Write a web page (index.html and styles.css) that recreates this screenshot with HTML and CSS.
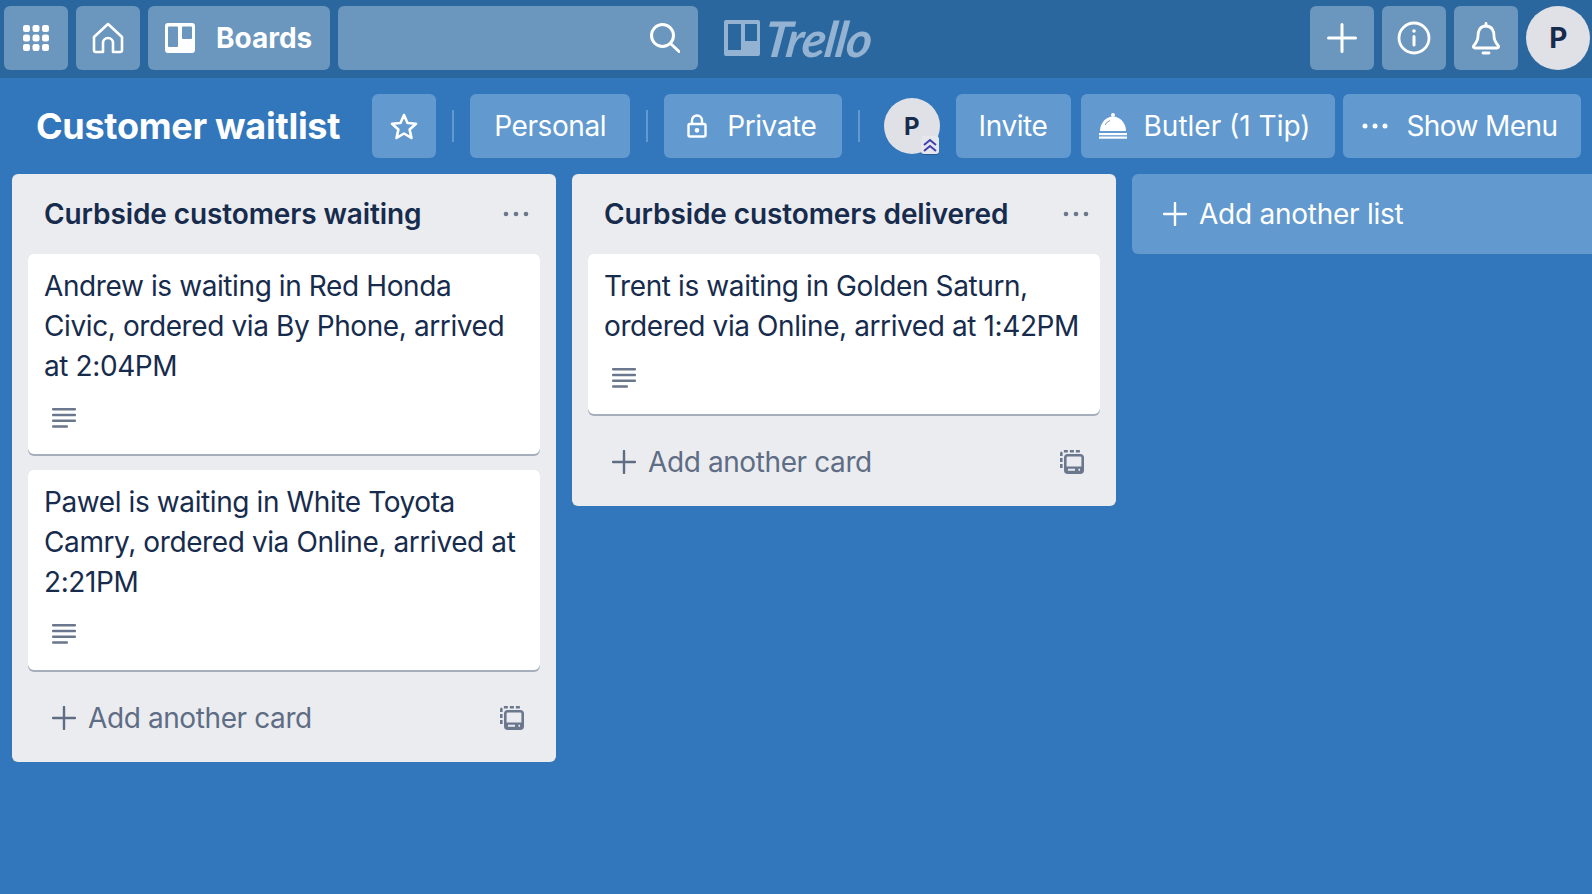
FILE: index.html
```html
<!DOCTYPE html>
<html lang="en">
  <head>
    <meta charset="UTF-8" />
    <title>Customer waitlist | Trello</title>
    <link rel="stylesheet" href="styles.css">
  </head>
  <body>
    <!-- Top bar -->
    <header class="topbar">
      <button class="top-btn square" aria-label="Apps">
        <svg class="icon" width="28" height="28" viewBox="0 0 28 28" fill="#fff">
          <rect x="1" y="1" width="7" height="7" rx="2.2"/><rect x="10.5" y="1" width="7" height="7" rx="2.2"/><rect x="20" y="1" width="7" height="7" rx="2.2"/>
          <rect x="1" y="10.5" width="7" height="7" rx="2.2"/><rect x="10.5" y="10.5" width="7" height="7" rx="2.2"/><rect x="20" y="10.5" width="7" height="7" rx="2.2"/>
          <rect x="1" y="20" width="7" height="7" rx="2.2"/><rect x="10.5" y="20" width="7" height="7" rx="2.2"/><rect x="20" y="20" width="7" height="7" rx="2.2"/>
        </svg>
      </button>
      <button class="top-btn square" aria-label="Home">
        <svg class="icon" width="32" height="32" viewBox="0 0 32 32" fill="none" stroke="#fff" stroke-width="2.6" stroke-linejoin="round">
          <path d="M16 2 L2 15 V28 a2 2 0 0 0 2 2 H11 V21 a5 5 0 0 1 10 0 V30 H28 a2 2 0 0 0 2 -2 V15 Z"/>
        </svg>
      </button>
      <button class="top-btn boards-btn">
        <svg class="icon" width="30" height="30" viewBox="0 0 30 30">
          <path fill="#fff" fill-rule="evenodd" d="M3 0 H27 a3 3 0 0 1 3 3 V27 a3 3 0 0 1 -3 3 H3 a3 3 0 0 1 -3 -3 V3 a3 3 0 0 1 3 -3 Z M4 3.5 a1 1 0 0 0 -1 1 V23 a1 1 0 0 0 1 1 H12 a1 1 0 0 0 1 -1 V4.500 a1 1 0 0 0 -1 -1 Z M18 3.500 a1 1 0 0 0 -1 1 V15 a1 1 0 0 0 1 1 H26 a1 1 0 0 0 1 -1 V4.500 a1 1 0 0 0 -1 -1 Z"/>
        </svg>
        <span>Boards</span>
      </button>
      <div class="search">
        <svg class="icon" width="30" height="30" viewBox="0 0 30 30" fill="none" stroke="#fff" stroke-width="3" stroke-linecap="round">
          <circle cx="12.500" cy="12.500" r="11"/>
          <path d="M20.500 20.500 L29 28.500"/>
        </svg>
      </div>
      <div class="logo">
        <svg class="logo-mark" width="36" height="36" viewBox="0 0 36 36">
          <path fill="#94b2d1" fill-rule="evenodd" d="M2 0 H34 a2 2 0 0 1 2 2 V34 a2 2 0 0 1 -2 2 H2 a2 2 0 0 1 -2 -2 V2 a2 2 0 0 1 2 -2 Z M4 4 V30 H17 V4 Z M21 4 V21 H33 V4 Z"/>
        </svg>
        <span class="logo-text">Trello</span>
      </div>
      <div class="top-right">
        <button class="top-btn square" aria-label="Create">
          <svg class="icon" width="30" height="30" viewBox="0 0 30 30" stroke="#fff" stroke-width="3" stroke-linecap="round">
            <path d="M15 1.500 V28.500 M1.500 15 H28.500"/>
          </svg>
        </button>
        <button class="top-btn square" aria-label="Information">
          <svg class="icon" width="34" height="34" viewBox="0 0 34 34" fill="none" stroke="#fff" stroke-width="2.800" stroke-linecap="round">
            <circle cx="17" cy="17" r="15"/>
            <path d="M17 15.500 V24" stroke-width="3"/>
            <circle cx="17" cy="10" r="1.100" fill="#fff" stroke-width="1.400"/>
          </svg>
        </button>
        <button class="top-btn square" aria-label="Notifications">
          <svg class="icon" width="28" height="33" viewBox="0 0 28 33" fill="none" stroke="#fff" stroke-width="2.800" stroke-linejoin="round" stroke-linecap="round">
            <path d="M14 4 C8 4 6 9 6 14 C6 19 4 21 1.500 24 Q1 26 3 26 H25 Q27 26 26.500 24 C24 21 22 19 22 14 C22 9 20 4 14 4 Z"/>
            <path d="M14 1.500 V4 M11 31 H17"/>
          </svg>
        </button>
        <div class="avatar avatar-top">P</div>
      </div>
    </header>

    <!-- Board header -->
    <div class="board-bar">
      <h1 class="board-title">Customer waitlist</h1>
      <button class="board-btn star-btn" aria-label="Star">
        <svg class="icon" width="28" height="27" viewBox="0 0 28 27" fill="none" stroke="#fff" stroke-width="2.600" stroke-linejoin="round">
          <path d="M14 2 L17.500 10 L26 10.800 L19.600 16.500 L21.500 25 L14 20.500 L6.500 25 L8.400 16.500 L2 10.800 L10.500 10 Z"/>
        </svg>
      </button>
      <span class="sep"></span>
      <button class="board-btn">Personal</button>
      <span class="sep"></span>
      <button class="board-btn private-btn">
        <svg class="icon" width="20" height="24" viewBox="0 0 20 24" fill="none" stroke="#fff" stroke-width="2.400">
          <path d="M5 10 V6.500 a5 5 0 0 1 10 0 V10"/>
          <rect x="1.500" y="10" width="17" height="12.500" rx="1.500"/>
          <circle cx="10" cy="16.300" r="1.200" fill="#fff"/>
        </svg>
        Private
      </button>
      <span class="sep"></span>
      <div class="avatar avatar-member">
        P
        <span class="admin-badge">
          <svg width="16" height="15" viewBox="0 0 16 15" fill="none" stroke="#3f3fb0" stroke-width="2">
            <path d="M2 7 L8 2 L14 7 M2 13 L8 8 L14 13"/>
          </svg>
        </span>
      </div>
      <button class="board-btn invite-btn">Invite</button>
      <button class="board-btn butler-btn">
        <svg class="icon" width="28" height="26" viewBox="0 0 28 26" fill="#fff">
          <circle cx="14" cy="2" r="2"/>
          <path d="M1 18 C1 10 7 3.500 14 3.500 C21 3.500 27 10 27 18 Z"/>
          <rect x="0" y="20" width="28" height="2.200"/>
          <rect x="0" y="23.500" width="28" height="2.200"/>
          <path d="M6 12 Q8 8.500 11 7.500" fill="none" stroke="#8a98a8" stroke-width="1"/>
        </svg>
        Butler (1 Tip)
      </button>
      <button class="board-btn menu-btn">
        <svg class="icon" width="26" height="6" viewBox="0 0 26 6" fill="#fff">
          <circle cx="3" cy="3" r="2.500"/><circle cx="13" cy="3" r="2.500"/><circle cx="23" cy="3" r="2.500"/>
        </svg>
        Show Menu
      </button>
    </div>

    <!-- Lists -->
    <main class="lists">
      <section class="list">
        <div class="list-head">
          <h2>Curbside customers waiting</h2>
          <svg class="dots" width="26" height="6" viewBox="0 0 26 6" fill="#6b778c">
            <circle cx="3" cy="3" r="2.300"/><circle cx="13" cy="3" r="2.300"/><circle cx="23" cy="3" r="2.300"/>
          </svg>
        </div>
        <article class="card">
          <p>Andrew is waiting in Red Honda Civic, ordered via By Phone, arrived at 2:04PM</p>
          <svg class="desc-icon" width="24" height="20" viewBox="0 0 24 20" fill="#6b778c">
            <rect y="0" width="24" height="2.400" rx="1"/><rect y="5.800" width="24" height="2.400" rx="1"/><rect y="11.500" width="24" height="2.400" rx="1"/><rect y="17.300" width="16" height="2.400" rx="1"/>
          </svg>
        </article>
        <article class="card">
          <p>Pawel is waiting in White Toyota Camry, ordered via Online, arrived at 2:21PM</p>
          <svg class="desc-icon" width="24" height="20" viewBox="0 0 24 20" fill="#6b778c">
            <rect y="0" width="24" height="2.400" rx="1"/><rect y="5.800" width="24" height="2.400" rx="1"/><rect y="11.500" width="24" height="2.400" rx="1"/><rect y="17.300" width="16" height="2.400" rx="1"/>
          </svg>
        </article>
        <div class="list-foot">
          <svg class="plus" width="24" height="24" viewBox="0 0 24 24" stroke="#5e6c84" stroke-width="2.400" stroke-linecap="round">
            <path d="M12 1 V23 M1 12 H23"/>
          </svg>
          <span>Add another card</span>
          <svg class="template" width="24" height="24" viewBox="0 0 24 24" fill="none" stroke="#6b778c" stroke-width="2.600">
            <path d="M1.300 18 V4 a2.700 2.700 0 0 1 2.700 -2.700 H20" stroke-dasharray="4 2"/>
            <rect x="5.300" y="5.300" width="17.400" height="17.400" rx="2.500"/>
            <path d="M5 16.500 H23 V20.500 a2.500 2.500 0 0 1 -2.500 2.500 H7.500 a2.500 2.500 0 0 1 -2.500 -2.500 Z" fill="#6b778c" stroke="none"/>
            <path d="M8 19.800 H15 M18.500 19.800 H20" stroke="#ebecf0" stroke-width="2"/>
          </svg>
        </div>
      </section>

      <section class="list">
        <div class="list-head">
          <h2>Curbside customers delivered</h2>
          <svg class="dots" width="26" height="6" viewBox="0 0 26 6" fill="#6b778c">
            <circle cx="3" cy="3" r="2.300"/><circle cx="13" cy="3" r="2.300"/><circle cx="23" cy="3" r="2.300"/>
          </svg>
        </div>
        <article class="card">
          <p>Trent is waiting in Golden Saturn, ordered via Online, arrived at 1:42PM</p>
          <svg class="desc-icon" width="24" height="20" viewBox="0 0 24 20" fill="#6b778c">
            <rect y="0" width="24" height="2.400" rx="1"/><rect y="5.800" width="24" height="2.400" rx="1"/><rect y="11.500" width="24" height="2.400" rx="1"/><rect y="17.300" width="16" height="2.400" rx="1"/>
          </svg>
        </article>
        <div class="list-foot">
          <svg class="plus" width="24" height="24" viewBox="0 0 24 24" stroke="#5e6c84" stroke-width="2.400" stroke-linecap="round">
            <path d="M12 1 V23 M1 12 H23"/>
          </svg>
          <span>Add another card</span>
          <svg class="template" width="24" height="24" viewBox="0 0 24 24" fill="none" stroke="#6b778c" stroke-width="2.600">
            <path d="M1.300 18 V4 a2.700 2.700 0 0 1 2.700 -2.700 H20" stroke-dasharray="4 2"/>
            <rect x="5.300" y="5.300" width="17.400" height="17.400" rx="2.500"/>
            <path d="M5 16.500 H23 V20.500 a2.500 2.500 0 0 1 -2.500 2.500 H7.500 a2.500 2.500 0 0 1 -2.500 -2.500 Z" fill="#6b778c" stroke="none"/>
            <path d="M8 19.800 H15 M18.500 19.800 H20" stroke="#ebecf0" stroke-width="2"/>
          </svg>
        </div>
      </section>

      <button class="add-list">
        <svg width="24" height="24" viewBox="0 0 24 24" stroke="#fff" stroke-width="2.400" stroke-linecap="round">
          <path d="M12 1 V23 M1 12 H23"/>
        </svg>
        Add another list
      </button>
    </main>
  </body>
</html>
```

FILE: styles.css
```css
/* General Styling */
* {
  box-sizing: border-box;
}
html,
body {
  height: 100%;
}
body {
  margin: 0;
  overflow: hidden;
  font-family: Inter, "Noto Sans", sans-serif;
  font-size: 28px;
  letter-spacing: -0.4px;
  color: #172b4d;
  background-color: #3277bb;
}
button {
  border: none;
  padding: 0;
  margin: 0;
  color: #fff;
  font: inherit;
  letter-spacing: inherit;
  cursor: pointer;
}
.icon {
  flex: none;
}

/* Top Bar */
.topbar {
  display: flex;
  align-items: flex-start;
  gap: 8px;
  height: 78px;
  padding: 6px 2px 0 4px;
  background-color: #2a679f;
}
.top-btn {
  display: flex;
  align-items: center;
  justify-content: center;
  height: 64px;
  border-radius: 6px;
  background-color: #6b96bd;
}
.square {
  width: 64px;
}
.boards-btn {
  width: 182px;
  justify-content: flex-start;
  gap: 21px;
  padding-left: 17px;
  font-weight: 700;
  letter-spacing: 0;
}
.search {
  display: flex;
  align-items: center;
  justify-content: flex-end;
  width: 360px;
  height: 64px;
  padding-right: 18px;
  border-radius: 6px;
  background-color: #6b96bd;
}
.logo {
  display: flex;
  align-items: center;
  gap: 5px;
  height: 64px;
  margin-left: 18px;
  color: #94b2d1;
}
.logo-text {
  font-family: Lato, sans-serif;
  font-style: italic;
  font-weight: 700;
  font-size: 49px;
  line-height: 56px;
  letter-spacing: -1px;
  transform: skewX(-8deg);
}
.top-right {
  display: flex;
  align-items: center;
  gap: 8px;
  margin-left: auto;
}
.avatar {
  display: flex;
  align-items: center;
  justify-content: center;
  border-radius: 50%;
  background-color: #dfe1e6;
  color: #172b4d;
  font-weight: 700;
}
.avatar-top {
  width: 64px;
  height: 64px;
}

/* Board Header */
.board-bar {
  display: flex;
  align-items: center;
  height: 64px;
  margin-top: 16px;
  padding-left: 36px;
}
.board-title {
  flex: none;
  margin: 0 32px 0 0;
  font-size: 36px;
  font-weight: 700;
  line-height: 64px;
  letter-spacing: -0.28px;
  white-space: nowrap;
  color: #fff;
}
.board-btn {
  display: flex;
  align-items: center;
  flex: none;
  height: 64px;
  padding: 0 24px;
  border-radius: 6px;
  background-color: #6299cf;
}
.star-btn {
  justify-content: center;
  width: 64px;
  padding: 0;
}
.sep {
  flex: none;
  width: 2px;
  height: 32px;
  margin: 0 16px;
  background-color: #6299cf;
}
.private-btn {
  gap: 20px;
  padding: 0 25px 0 23px;
}
.avatar-member {
  position: relative;
  flex: none;
  width: 56px;
  height: 56px;
  margin: 0 16px 0 8px;
  font-size: 24px;
}
.admin-badge {
  position: absolute;
  right: 1px;
  bottom: 0;
  display: flex;
  width: 18px;
  height: 18px;
  justify-content: center;
  align-items: center;
  border-radius: 3px;
  background-color: #e6e7ec;
  box-shadow: 0 1px 0 #2a5a96;
}
.invite-btn {
  margin-right: 10px;
  padding: 0 23px;
}
.butler-btn {
  gap: 17px;
  margin-right: 8px;
  padding: 0 25px 0 18px;
  letter-spacing: 0;
}
.menu-btn {
  gap: 18px;
  padding: 0 24px 0 19px;
  letter-spacing: -0.6px;
}

/* Lists */
.lists {
  display: flex;
  align-items: flex-start;
  gap: 16px;
  padding: 16px 0 0 12px;
}
.list {
  flex: none;
  width: 544px;
  padding: 0 16px;
  border-radius: 6px;
  background-color: #ebecf0;
}
.list-head {
  display: flex;
  align-items: center;
  justify-content: space-between;
  height: 80px;
  padding: 0 11px 0 16px;
}
.list-head h2 {
  margin: 0;
  font-size: 28px;
  font-weight: 600;
  line-height: 40px;
  letter-spacing: -0.1px;
}
.card {
  margin-bottom: 16px;
  padding: 12px 16px 26px;
  border-radius: 6px;
  background-color: #fff;
  box-shadow: 0 2px 0 rgba(9, 30, 66, 0.3);
}
.card p {
  margin: 0;
  line-height: 40px;
}
.desc-icon {
  display: block;
  margin: 22px 0 0 8px;
}
.list-foot {
  display: flex;
  align-items: center;
  height: 76px;
  padding: 0 16px 12px 24px;
  color: #5e6c84;
}
.list-foot span {
  margin-left: 12px;
}
.template {
  margin-left: auto;
}

/* Add List */
.add-list {
  display: flex;
  align-items: center;
  flex: 1 1 0;
  gap: 12px;
  min-width: 0;
  height: 80px;
  padding-left: 31px;
  letter-spacing: -0.25px;
  border-radius: 6px 0 0 6px;
  background-color: #6299cf;
}
```
